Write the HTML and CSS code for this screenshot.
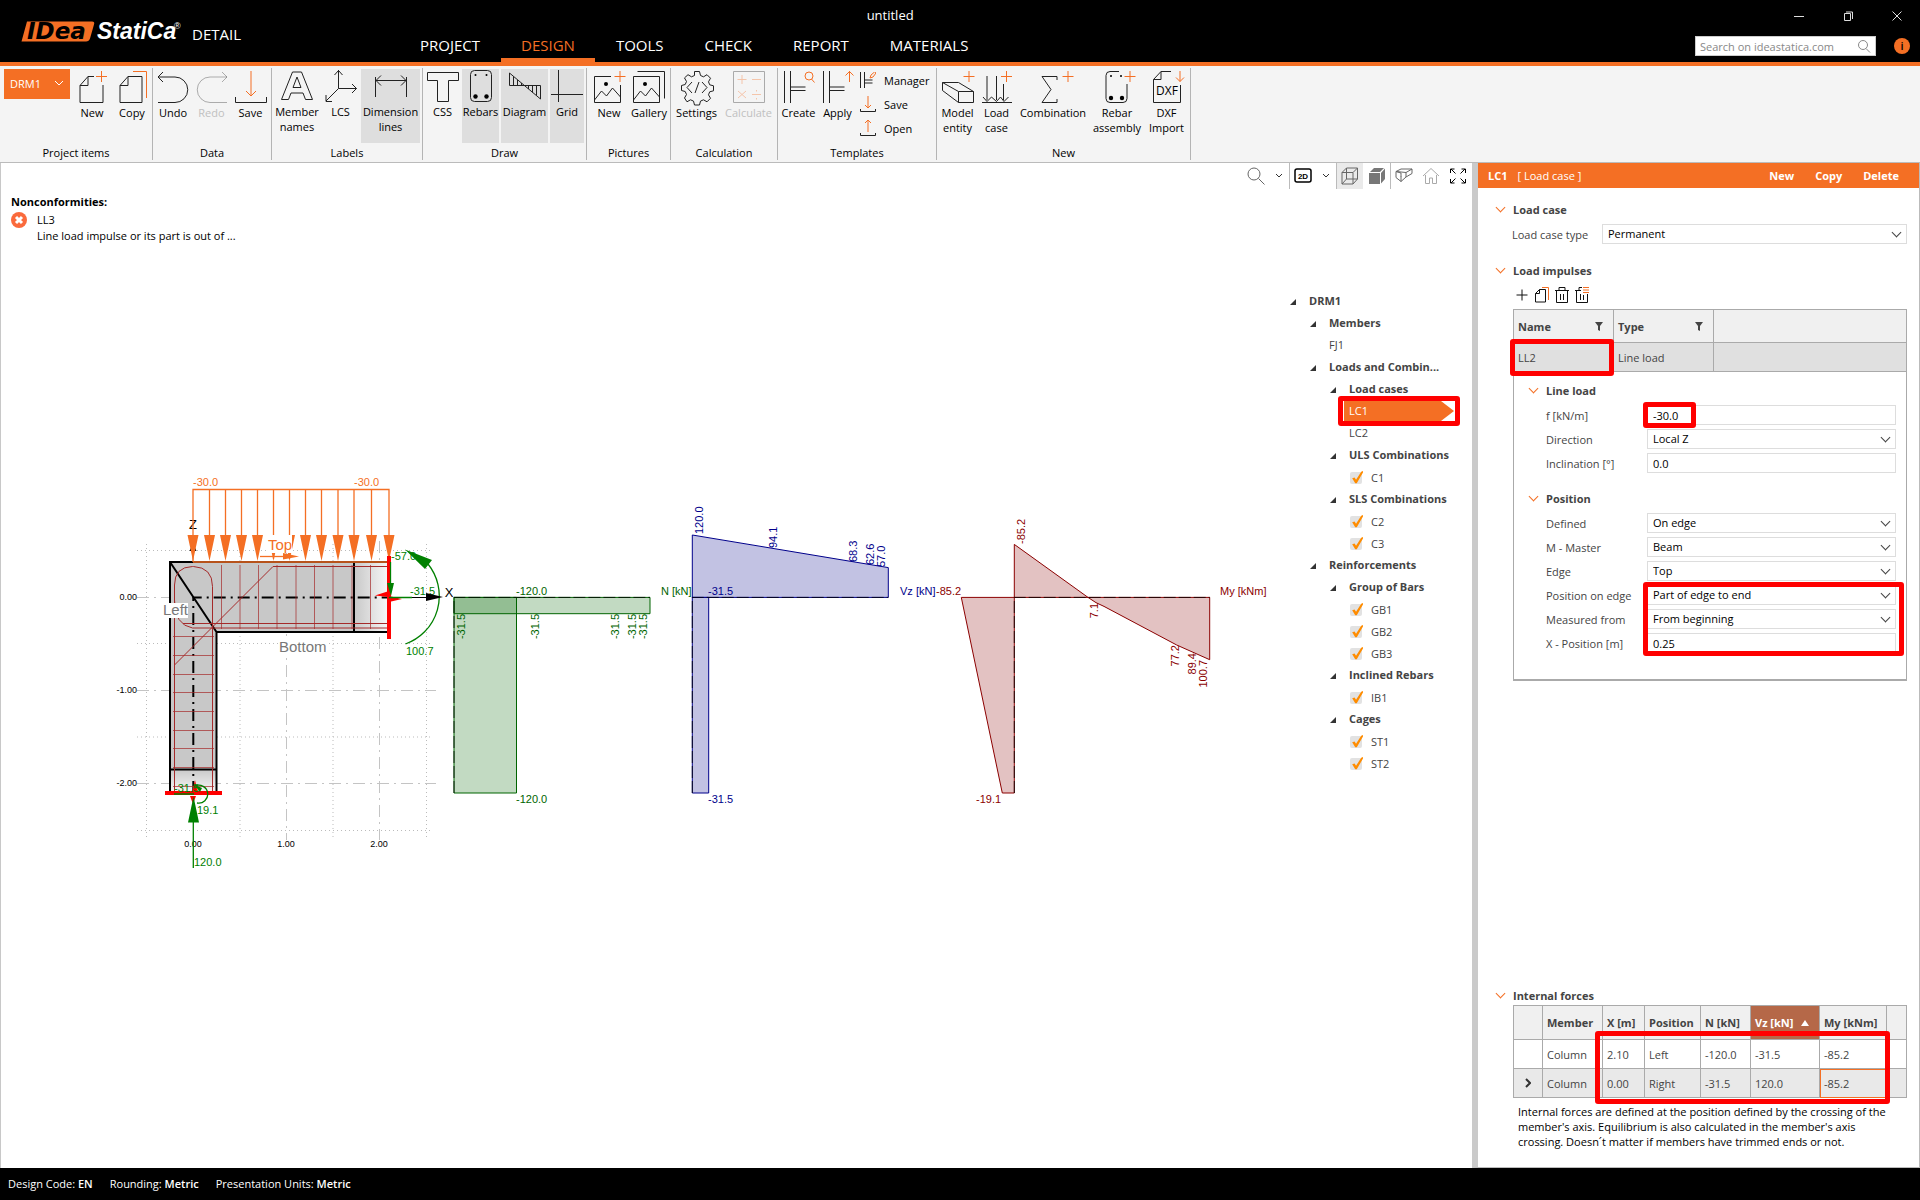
FILE: index.html
```html
<!DOCTYPE html>
<html lang="en">
<head>
    <meta charset="UTF-8">
    <title>untitled</title>
    <link rel="stylesheet" href="styles.css">
</head>
<body>
<header class="header">
    <div class="titlebar">
        <h1 class="title">untitled</h1>
        <div class="win">
            <button type="button" aria-label="Minimize"><svg width="12" height="12" viewBox="0 0 12 12"><path d="M1 6.5h10"/></svg></button>
            <button type="button" aria-label="Restore"><svg width="12" height="12" viewBox="0 0 12 12"><path d="M2.500 3.500h6v7h-6zM4 2h6.500v7"/></svg></button>
            <button type="button" aria-label="Close"><svg width="12" height="12" viewBox="0 0 12 12"><path d="M1.500 1.500l9 9M10.500 1.500l-9 9"/></svg></button>
        </div>
    </div>
    <div class="logo">
        <svg width="162" height="36" viewBox="0 -5 162 36">
            <path class="logo-plate" d="M8 3.500h65q3 0 2 3l-4 14q-1 3-4 3H2.500z"/>
            <text class="logo-idea" x="8" y="21">IDea</text>
            <text class="logo-statica" x="78" y="21">StatiCa</text>
            <text class="logo-reg" x="155" y="11">®</text>
        </svg>
        <span class="product">DETAIL</span>
    </div>
    <nav class="tabs">
        <a href="#">PROJECT</a>
        <a href="#" class="current">DESIGN</a>
        <a href="#">TOOLS</a>
        <a href="#">CHECK</a>
        <a href="#">REPORT</a>
        <a href="#">MATERIALS</a>
    </nav>
    <div class="help">
        <form class="search">
            <input type="text" placeholder="Search on ideastatica.com" aria-label="Search on ideastatica.com">
            <svg width="14" height="14" viewBox="0 0 14 14"><circle cx="6" cy="6" r="4.500"/><path d="M9 9.500l4 4"/></svg>
        </form>
        <button type="button" class="info" aria-label="Info">i</button>
    </div>
</header>

<div class="ribbon">
    <section class="group">
        <div class="tools tools-project">
            <button type="button" class="project">DRM1 <svg width="10" height="6" viewBox="0 0 10 6"><path d="M1 1l4 4 4-4"/></svg></button>
            <button type="button" class="tool">
                <svg class="ico" viewBox="0 0 32 32"><path d="M18 5.500h-6l-8 9v17h23V14M12 5.500v9H4"/><path class="o" d="M25.500 0v11M20 5.500h11"/></svg>New</button>
            <button type="button" class="tool">
                <svg class="ico" viewBox="0 0 32 32"><path d="M12 5.500h14v26H4v-17zM12 5.500v9H4"/><path class="o" d="M17 .5h13.500V27"/></svg>Copy</button>
        </div>
        <h2>Project items</h2>
    </section>
    <section class="group">
        <div class="tools tools-data">
            <button type="button" class="tool">
                <svg class="ico" viewBox="0 0 32 32"><path d="M1 6h17a12.500 12.500 0 0 1 0 25.500H1M6 1L1 6l5 5"/></svg>Undo</button>
            <button type="button" class="tool" disabled>
                <svg class="ico" viewBox="0 0 32 32"><path d="M31 6H14a12.500 12.500 0 0 0 0 25.500h17M26 1l5 5-5 5"/></svg>Redo</button>
            <button type="button" class="tool">
                <svg class="ico" viewBox="0 0 32 32"><path d="M.5 26v5.500h31V26"/><path class="o" d="M16 0v25M11 20l5 5 5-5"/></svg>Save</button>
        </div>
        <h2>Data</h2>
    </section>
    <section class="group short">
        <div class="tools tools-labels">
            <button type="button" class="tool">
                <svg class="ico" viewBox="0 0 32 32"><path d="M.5 29.500L11.500 2h9l11 27.500h-7L22 23H10l-2.500 6.500zM12 17.500h8L16 7z"/></svg>Member<br>names</button>
            <button type="button" class="tool">
                <svg class="ico" viewBox="0 0 32 32"><path d="M13.500 0v18.500h18M13.500 18.500L1 31M9.500 5l4-4.500 4 4.500M27 14l4.500 4.500L27 23M1 25v6.500h6"/></svg>LCS</button>
            <button type="button" class="tool on">
                <svg class="ico" viewBox="0 0 32 32"><path d="M.5 7v20M31.500 7v20M1 10.500h30M6 5.500l-5 5 5 5M26 5.500l5 5-5 5"/></svg>Dimension<br>lines</button>
        </div>
        <h2>Labels</h2>
    </section>
    <section class="group short">
        <div class="tools tools-draw">
            <button type="button" class="tool">
                <svg class="ico" viewBox="0 0 32 32"><path d="M.5 2.500h31v8h-10v21h-11v-21H.5z"/></svg>CSS</button>
            <button type="button" class="tool on">
                <svg class="ico" viewBox="0 0 32 32"><rect x="5.500" y=".5" width="21" height="31" rx="4"/><g class="dots"><circle cx="10.500" cy="5" r="1"/><circle cx="21.500" cy="5" r="1"/><circle cx="10.500" cy="26.500" r="2.200"/><circle cx="21.500" cy="26.500" r="2.200"/></g></svg>Rebars</button>
            <button type="button" class="tool on">
                <svg class="ico" viewBox="0 0 32 32"><path d="M.5 3l31 26V15.500H.5zM4.500 6.500v9M8.500 10v5.500M12.500 13v2.500M19.500 15.500v3.500M23.500 15.500v7M27.500 15.500v10"/></svg>Diagram</button>
            <button type="button" class="tool on">
                <svg class="ico" viewBox="0 0 32 32"><path d="M7.500 0v32M0 24.500h32"/></svg>Grid</button>
        </div>
        <h2>Draw</h2>
    </section>
    <section class="group">
        <div class="tools tools-two">
            <button type="button" class="tool">
                <svg class="ico" viewBox="0 0 32 32"><path d="M18 5.500H1.500v26h26V14M1.500 29l7-9 5 5 6-8 8 9"/><g class="dots"><circle cx="13" cy="13" r="2"/></g><path class="o" d="M27 0v11M21.500 5.500h11"/></svg>New</button>
            <button type="button" class="tool">
                <svg class="ico" viewBox="0 0 32 32"><path d="M.5 5.500h26v26H.5zM4.500.5h27v27M.5 29l7-9 5 5 6-8 8 9"/><g class="dots"><circle cx="12" cy="13" r="2"/></g></svg>Gallery</button>
        </div>
        <h2>Pictures</h2>
    </section>
    <section class="group">
        <div class="tools tools-calc">
            <button type="button" class="tool">
                <svg class="ico" viewBox="0 0 32 32"><path d="M13.500.5h5l1 4 3 1.300 3.500-2.100 3.500 3.500-2 3.600 1.200 3 3.800 1v5l-3.800 1-1.200 3 2 3.500-3.500 3.500-3.500-2-3 1.300-1 3.900h-5l-1-3.900-3-1.300-3.500 2L3.500 27l2-3.500-1.300-3-3.700-1v-5l3.700-1 1.300-3-2-3.600L7 3.700l3.500 2.100 3-1.300z"/><path d="M11 11l-5 5.500 5 5.500M21 11l5 5.500-5 5.500M18 11l-4 11"/></svg>Settings</button>
            <button type="button" class="tool" disabled>
                <svg class="ico" viewBox="0 0 32 32"><path d="M.5.500h31v31H.5z"/><path class="o" d="M4.500 8.500h9M9 4v9M19 8.500h9M5 20l8 7M13 20l-8 7M19 23.500h9M23.500 19v1.500M23.500 27v1.500"/></svg>Calculate</button>
        </div>
        <h2>Calculation</h2>
    </section>
    <section class="group">
        <div class="tools tools-templates">
            <button type="button" class="tool">
                <svg class="ico" viewBox="0 0 32 32"><path d="M1.500 0v32M7.500 0v32M7.500 16h15M7.500 19.500h15"/><g class="o"><circle cx="26" cy="5" r="4"/><path d="M28.500 8l3 3.500"/></g></svg>Create</button>
            <button type="button" class="tool">
                <svg class="ico" viewBox="0 0 32 32"><path d="M1.500 0v32M7.500 0v32M7.500 16h15M7.500 19.500h15"/><path class="o" d="M27.500 11V0M23.500 4.500L27.500.5l4 4"/></svg>Apply</button>
            <div class="stack">
                <button type="button"><svg width="16" height="16" viewBox="0 0 16 16"><path d="M.5 0v16M4.500 0v16M4.500 8h8M4.500 11h8"/><path class="o" d="M10 6l1-3 3.500-3 1.500 1-3 4z"/></svg>Manager</button>
                <button type="button"><svg width="16" height="16" viewBox="0 0 16 16"><path d="M.5 13v2.500h15V13"/><path class="o" d="M8 0v12M5 9l3 3 3-3"/></svg>Save</button>
                <button type="button"><svg width="16" height="16" viewBox="0 0 16 16"><path d="M.5 13v2.500h15V13"/><path class="o" d="M8 12V0M5 3l3-3 3 3"/></svg>Open</button>
            </div>
        </div>
        <h2>Templates</h2>
    </section>
    <section class="group">
        <div class="tools tools-new">
            <button type="button" class="tool">
                <svg class="ico" viewBox="0 0 32 32"><path d="M.5 11.500h16l15 9v11h-15l-16-12zM.5 11.500l16 9h15M16.500 20.500v11"/><path class="o" d="M27 0v11M21.500 5.500h11"/></svg>Model<br>entity</button>
            <button type="button" class="tool">
                <svg class="ico" viewBox="0 0 32 32"><path d="M1 31.500h30M6 5v24M15.500 5v24M22.500 13v16M2 26l4 4.500 4.500-4.500 5 4.500 4-4.500 3.500 4.500 4.500-4.500"/><path class="o" d="M25.500 0v11M20 5.500h11"/></svg>Load<br>case</button>
            <button type="button" class="tool">
                <svg class="ico" viewBox="0 0 32 32"><path d="M20 9V5.500H5l9 13-9 13h15V28"/><path class="o" d="M31 0v11M25.500 5.500h11"/></svg>Combination</button>
            <button type="button" class="tool">
                <svg class="ico" viewBox="0 0 32 32"><path d="M18 .5H9q-4 0-4 4v23q0 4 4 4h13q4 0 4-4V13"/><g class="dots"><circle cx="10" cy="5" r="1"/><circle cx="20" cy="5" r="1"/><circle cx="10" cy="27" r="2.200"/><circle cx="21" cy="27" r="2.200"/></g><path class="o" d="M29 0v11M23.500 5.500h11"/></svg>Rebar<br>assembly</button>
            <button type="button" class="tool">
                <svg class="ico" viewBox="0 0 32 32"><path d="M20 .5H10l-7.500 8v23h27V14M10 .5v8H2.500"/><text class="dxf" x="16" y="24">DXF</text><path class="o" d="M29 0v10.500M25 6.500l4 4 4-4"/></svg>DXF<br>Import</button>
        </div>
        <h2>New</h2>
    </section>
</div>

<main class="main">
    <div class="viewer">
        <div class="viewbar">
            <button type="button" class="vb" aria-label="Zoom"><svg width="18" height="18" viewBox="0 0 18 18"><circle cx="7" cy="7" r="6"/><path d="M11.500 11.500l6 6"/></svg></button>
            <button type="button" class="vb drop" aria-label="Zoom options"><svg width="8" height="6" viewBox="0 0 8 6"><path d="M1 1l3 3 3-3"/></svg></button>
            <button type="button" class="vb line" aria-label="2D view"><svg class="k" width="18" height="16" viewBox="0 0 18 16"><rect x="1" y="1" width="16" height="13" rx="2"/><text x="9" y="11">2D</text></svg></button>
            <button type="button" class="vb drop" aria-label="2D options"><svg width="8" height="6" viewBox="0 0 8 6"><path d="M1 1l3 3 3-3"/></svg></button>
            <button type="button" class="vb line on" aria-label="Wireframe"><svg width="18" height="18" viewBox="0 0 18 18"><path d="M1 5.500L5.500 1h11v11L12 17H1zM1 5.500h11V17M12 5.500L16.500 1M5.500 1v11h11M5.500 12L1 17"/></svg></button>
            <button type="button" class="vb" aria-label="Solid"><svg width="18" height="18" viewBox="0 0 18 18"><path class="f" d="M1 6h11v11H1zM2 5l4-4h10l-4 4zM13 6l4-4.500V12l-4 4.500z"/></svg></button>
            <button type="button" class="vb line" aria-label="Perspective"><svg width="18" height="16" viewBox="0 0 18 16"><path d="M1 3.500L6 1h11l-6 3.500zM1 3.500v6l5 4v-5M11 4.500v4.500l-5 4.500M17 1v4.500L11 9M1 3.500l5 1.500v4"/></svg></button>
            <button type="button" class="vb dim" aria-label="Home"><svg width="18" height="18" viewBox="0 0 18 18"><path d="M1 9l8-7.500L17 9M3.500 8v8.500h4V11h3v5.500h4V8"/></svg></button>
            <button type="button" class="vb" aria-label="Full screen"><svg class="k thin" width="18" height="18" viewBox="0 0 18 18"><path d="M1.500 6V2h4M2 2l4.500 4.500M12.500 2h4v4M16 2l-4.500 4.500M1.500 12v4h4M2 16l4.500-4.500M16.500 12v4h-4M16 16l-4.500-4.500"/></svg></button>
        </div>
        <div class="scene">
            <div class="drawing">
                <svg class="canvas" width="1281" height="720" viewBox="1 189 1281 720">
                    <defs>
                        <linearGradient id="fadeX"><stop offset="0" stop-color="#c8c8c8"/><stop offset="1" stop-color="#f8f8f8"/></linearGradient>
                        <linearGradient id="fadeY" x2="0" y2="1"><stop offset="0" stop-color="#c8c8c8"/><stop offset="1" stop-color="#f8f8f8"/></linearGradient>
                    </defs>
                    <!-- background grid -->
                    <path class="g-dot" d="M146.500 544v296M240 544v296M333 544v296M426.500 544v296M137 550.500h296M137 643.500h296M137 737h296M137 830.500h296"/>
                    <path class="g-dash" d="M286.500 545v295M379.500 541v299M137 597.500h299M137 690.500h299M137 783.500h299"/>
                    <g class="axis-y"><text x="137" y="600">0.00</text><text x="137" y="693">-1.00</text><text x="137" y="786">-2.00</text></g>
                    <g class="axis-x"><text x="193" y="847">0.00</text><text x="286" y="847">1.00</text><text x="379" y="847">2.00</text></g>

                    <!-- frame joint -->
                    <path d="M170 562h184v70H217v137h-47z" fill="#c8c8c8"/>
                    <rect x="354" y="562" width="35" height="70" fill="url(#fadeX)"/>
                    <rect x="170" y="769" width="47" height="24" fill="url(#fadeY)"/>
                    <path class="member" d="M389 562H170v231M389 632H216.500v161M170 562l46.500 70M354 562v70M170 769.500h47"/>
                    <path class="centre" d="M193.300 793V597.400H389"/>

                    <!-- rebars -->
                    <path class="bar" d="M174.500 793V585q0-18 18-18.500h1q19 1 19 20V793M174.500 600q0 25 18 28H389M183 623.500h206M174.500 665L273 566.500h116"/>
                    <path class="link" d="M221.500 565v64M240 565v64M258.500 565v64M277 565v64M296 565v64M314.500 565v64M333 565v64M352 565v64M370.500 565v64M173 636.500h41M173 655.500h41M173 674.500h41M173 692.500h41M173 711.500h41M173 730.500h41M173 748.500h41M173 767.500h41M173 786.500h41"/>

                    <!-- line load -->
                    <text class="axis" x="193" y="529">Z</text>
                    <path d="M189.500 551l3.500-8 3.500 8z"/>
                    <path class="load" d="M193 562V489.500h196V562M209.500 489v60M225.500 489v60M241.500 489v60M257.500 489v60M273.500 489v70M289.500 489v70M305.500 489v60M321.500 489v60M338 489v60M354 489v60M371.500 489v60M193 562h196"/>
                    <path class="load-head" d="M187.500 535h11l-5.500 26zM204 535h11l-5.500 26zM220 535h11l-5.500 26zM236 535h11l-5.500 26zM252 535h11l-5.500 26zM268 535h11l-5.500 26zM284 535h11l-5.500 26zM300 535h11l-5.500 26zM316 535h11l-5.500 26zM332.500 535h11l-5.500 26zM348.500 535h11l-5.500 26zM366 535h11l-5.500 26zM383.500 535h11l-5.500 26z"/>
                    <g class="val load-head"><text x="193" y="486">-30.0</text><text x="354" y="486">-30.0</text></g>
                    <rect class="plate" x="267" y="535" width="25" height="18"/>
                    <path class="load" d="M260 556.500h30"/>
                    <path class="load-head" d="M283 553l16 3.500-16 3z"/>
                    <text class="edge load-head" x="268" y="550">Top</text>
                    <rect class="plate" x="163" y="603" width="25" height="15"/>
                    <text class="edge" x="163" y="615">Left</text>
                    <rect class="plate" x="279" y="639" width="48" height="14"/>
                    <text class="edge" x="279" y="652">Bottom</text>

                    <!-- supports and reactions -->
                    <path class="support" d="M389 556v83M165 793h57"/>
                    <path class="support-head" d="M375 595.500l14-4.500v5l13 3-13 3v-5zM190 796h6l-3 8zM192 793l3-13 3 13z"/>
                    <path class="react" d="M390.500 562v22M389 597.500h23M405.500 644A51 51 0 0 0 428 564M174 794h20M193.300 868v-50M195 786a9 9 0 1 1 2 17"/>
                    <path class="react-head" d="M387 583h7l-3 13zM405 549.500l27 10.500-7 9zM188 822.500h11l-5.500-26zM195 785l7 3-2 4z"/>
                    <g class="val react-head"><text x="391" y="560">-57.0</text><text x="410" y="595">-31.5</text><text x="406" y="655">100.7</text><text x="174" y="792">-31.5</text><text x="197" y="814">19.1</text><text x="194" y="866">120.0</text></g>
                    <path d="M412 597h14v-4l17 4-17 4v-3h-14z"/>
                    <text class="axis" x="449" y="597">X</text>

                    <!-- N diagram -->
                    <g class="dia dia-n">
                        <path d="M454 597.400h196v16.300H454z"/>
                        <path d="M454 597.400h62.500V793H454z"/>
                        <g class="val"><text x="516" y="595">-120.0</text><text x="661" y="595">N [kN]</text><text x="516" y="803">-120.0</text></g>
                        <g class="val rot-end"><text transform="translate(465 614) rotate(-90)">-31.5</text><text transform="translate(539 614) rotate(-90)">-31.5</text><text transform="translate(619 614) rotate(-90)">-31.5</text><text transform="translate(636 614) rotate(-90)">-31.5</text><text transform="translate(647 614) rotate(-90)">-31.5</text></g>
                    </g>
                    <!-- Vz diagram -->
                    <g class="dia dia-v">
                        <path d="M692.300 597.400V535l196 32.600v29.800zM692.300 597.400h16.400V793h-16.400z"/>
                        <g class="val"><text x="708" y="595">-31.5</text><text x="900" y="595">Vz [kN]</text><text x="708" y="803">-31.5</text></g>
                        <g class="val"><text transform="translate(703 534) rotate(-90)">120.0</text><text transform="translate(777 548) rotate(-90)">94.1</text><text transform="translate(857 562) rotate(-90)">68.3</text><text transform="translate(874 565) rotate(-90)">62.6</text><text transform="translate(885 567) rotate(-90)">57.0</text></g>
                    </g>
                    <!-- My diagram -->
                    <g class="dia dia-m">
                        <path d="M1014.300 597.400v-53l73.700 53q8 6 16 9l72.700 38.600 33 14.700v-62.300zM1014.300 597.400h-53L1002.300 793h12z"/>
                        <g class="val"><text x="936" y="595">-85.2</text><text x="1220" y="595">My [kNm]</text><text x="976" y="803">-19.1</text></g>
                        <g class="val"><text transform="translate(1025 544) rotate(-90)">-85.2</text></g>
                        <g class="val rot-end"><text transform="translate(1098 603) rotate(-90)">7.1</text><text transform="translate(1179 645) rotate(-90)">77.2</text><text transform="translate(1196 653) rotate(-90)">89.4</text><text transform="translate(1207 660) rotate(-90)">100.7</text></g>
                    </g>
                    <path class="base" d="M454 793V597.400h196M692.300 793V597.400h196M1014.300 793V597.400h195.500"/>
                </svg>
                <div class="noncon">
                    <h3>Nonconformities:</h3>
                    <div class="noncon-item">
                        <svg class="error" width="16" height="16" viewBox="0 0 16 16"><circle cx="8" cy="8" r="8"/><path d="M5 5l6 6M11 5l-6 6"/></svg>
                        <p>LL3<br>Line load impulse or its part is out of ...</p>
                    </div>
                </div>
            </div>
            <ul class="tree">
                <li><b>DRM1</b>
                    <ul>
                        <li><b>Members</b>
                            <ul><li><a href="#">FJ1</a></li></ul>
                        </li>
                        <li><b>Loads and Combin...</b>
                            <ul>
                                <li><b>Load cases</b>
                                    <ul>
                                        <li class="selected"><a href="#">LC1</a><span class="mark"></span></li>
                                        <li><a href="#">LC2</a></li>
                                    </ul>
                                </li>
                                <li><b>ULS Combinations</b>
                                    <ul><li><label><input type="checkbox" checked>C1</label></li></ul>
                                </li>
                                <li><b>SLS Combinations</b>
                                    <ul>
                                        <li><label><input type="checkbox" checked>C2</label></li>
                                        <li><label><input type="checkbox" checked>C3</label></li>
                                    </ul>
                                </li>
                            </ul>
                        </li>
                        <li><b>Reinforcements</b>
                            <ul>
                                <li><b>Group of Bars</b>
                                    <ul>
                                        <li><label><input type="checkbox" checked>GB1</label></li>
                                        <li><label><input type="checkbox" checked>GB2</label></li>
                                        <li><label><input type="checkbox" checked>GB3</label></li>
                                    </ul>
                                </li>
                                <li><b>Inclined Rebars</b>
                                    <ul><li><label><input type="checkbox" checked>IB1</label></li></ul>
                                </li>
                                <li><b>Cages</b>
                                    <ul>
                                        <li><label><input type="checkbox" checked>ST1</label></li>
                                        <li><label><input type="checkbox" checked>ST2</label></li>
                                    </ul>
                                </li>
                            </ul>
                        </li>
                    </ul>
                </li>
            </ul>
        </div>
    </div>

    <aside class="panel">
        <div class="panel-head">
            <b>LC1</b><span>[ Load case ]</span>
            <div class="panel-actions">
                <button type="button">New</button>
                <button type="button">Copy</button>
                <button type="button">Delete</button>
            </div>
        </div>
        <div class="panel-body">
            <h3 class="sec">Load case</h3>
            <div class="row row-case">
                <label for="caseType">Load case type</label>
                <span class="sel"><select id="caseType"><option>Permanent</option></select></span>
            </div>

            <h3 class="sec sec-impulses">Load impulses</h3>
            <div class="icons">
                <button type="button" aria-label="Add"><svg width="14" height="16" viewBox="0 0 14 16"><path d="M7 2.500v11M1.500 8h11"/></svg></button>
                <button type="button" aria-label="Copy"><svg width="14" height="16" viewBox="0 0 14 16"><path d="M4.500 2.500h6v12.500H.5V6.500zM4.500 2.500v4h-4"/><path class="o" d="M7 .5h6.500V13"/></svg></button>
                <button type="button" aria-label="Delete"><svg width="14" height="16" viewBox="0 0 14 16"><path d="M0 3.500h14M4 3.500v-3h6v3M1.500 3.500v12h11v-12M5.500 7v6M8.500 7v6"/></svg></button>
                <button type="button" aria-label="Delete all"><svg width="14" height="16" viewBox="0 0 14 16"><path d="M0 3.500h6M4 3.500v-3h3M1.500 3.500v12h11V7M5.500 7v6M8.500 8v5"/><path class="o" d="M8 .5h6M8 3h6M8 5.500h6"/></svg></button>
            </div>

            <table class="grid impulses">
                <tr>
                    <th>Name <svg class="filter" width="8" height="9" viewBox="0 0 8 9"><path d="M0 0h8L5 4v5L3 8V4z"/></svg></th>
                    <th>Type <svg class="filter" width="8" height="9" viewBox="0 0 8 9"><path d="M0 0h8L5 4v5L3 8V4z"/></svg></th>
                    <th></th>
                </tr>
                <tr class="active">
                    <td>LL2<span class="mark"></span></td>
                    <td>Line load</td>
                    <td></td>
                </tr>
            </table>

            <div class="detail">
                <h3 class="sec">Line load</h3>
                <div class="row"><label for="f">f [kN/m]</label><span class="field"><input type="text" id="f" value="-30.0"><span class="mark mark-f"></span></span></div>
                <div class="row"><label for="dir">Direction</label><span class="sel"><select id="dir"><option>Local Z</option></select></span></div>
                <div class="row"><label for="inc">Inclination [°]</label><span class="field"><input type="text" id="inc" value="0.0"></span></div>

                <h3 class="sec sec-pos">Position</h3>
                <div class="row"><label for="defined">Defined</label><span class="sel"><select id="defined"><option>On edge</option></select></span></div>
                <div class="row"><label for="master">M - Master</label><span class="sel"><select id="master"><option>Beam</option></select></span></div>
                <div class="row"><label for="edge">Edge</label><span class="sel"><select id="edge"><option>Top</option></select></span></div>
                <div class="marked-rows">
                    <div class="row"><label for="onEdge">Position on edge</label><span class="sel"><select id="onEdge"><option>Part of edge to end</option></select></span></div>
                    <div class="row"><label for="from">Measured from</label><span class="sel"><select id="from"><option>From beginning</option></select></span></div>
                    <div class="row"><label for="xpos">X - Position [m]</label><span class="field"><input type="text" id="xpos" value="0.25"></span></div>
                    <span class="mark mark-pos"></span>
                </div>
            </div>

            <div class="forces-box">
                <h3 class="sec">Internal forces</h3>
                <div class="forces-wrap">
                    <table class="grid forces">
                        <colgroup><col class="c1"><col class="c2"><col class="c3"><col class="c4"><col class="c5"><col class="c6"><col class="c7"><col></colgroup>
                        <tr><th></th><th>Member</th><th>X [m]</th><th>Position</th><th>N [kN]</th><th class="sorted">Vz [kN] <svg class="filter" width="8" height="6" viewBox="0 0 8 6"><path d="M0 6l4-6 4 6z"/></svg></th><th>My [kNm]</th><th></th></tr>
                        <tr><td></td><td>Column</td><td>2.10</td><td>Left</td><td>-120.0</td><td>-31.5</td><td>-85.2</td><td></td></tr>
                        <tr class="active"><td><svg class="arrow" width="6" height="10" viewBox="0 0 6 10"><path d="M1 1l4 4-4 4"/></svg></td><td>Column</td><td>0.00</td><td>Right</td><td>-31.5</td><td>120.0</td><td class="focus">-85.2</td><td></td></tr>
                    </table>
                    <span class="mark mark-forces"></span>
                </div>
                <p class="note">Internal forces are defined at the position defined by the crossing of the member's axis. Equilibrium is also calculated in the member's axis crossing. Doesn´t matter if members have trimmed ends or not.</p>
            </div>
        </div>
    </aside>
</main>

<footer class="status">
    <span>Design Code: <b>EN</b></span>
    <span>Rounding: <b>Metric</b></span>
    <span>Presentation Units: <b>Metric</b></span>
</footer>
</body>
</html>
```

FILE: styles.css
```css
* {
    box-sizing: border-box;
    margin: 0;
    padding: 0;
}

body {
    display: flex;
    flex-direction: column;
    min-height: 100vh;
    font: 11px/15px "Open Sans", "Noto Sans", sans-serif;
    color: #000;
    background: #fff;
}

button, input, select {
    font: inherit;
    color: inherit;
    border: 0;
    background: none;
    border-radius: 0;
}

ul {
    list-style: none;
}

a {
    color: inherit;
    text-decoration: none;
}

b, h3, th {
    font-size: 11px;
    font-weight: 700;
}

svg {
    fill: none;
    stroke: #222;
    flex: none;
}

svg text {
    stroke: none;
}

/* red callout frame */
.mark {
    position: absolute;
    inset: -3px;
    border: 5px solid #f00;
    border-radius: 3px;
    pointer-events: none;
    z-index: 2;
}

/* header */
.header {
    display: grid;
    grid-template-columns: 400px 1fr auto;
    grid-template-rows: 30px 32px;
    color: #fff;
    background: #000;
    border-bottom: 4px solid #f46f24;
}

.titlebar {
    grid-area: 1 / 1 / 2 / -1;
    display: flex;
    align-items: center;
}

.title {
    flex: 1;
    padding-left: 4px;
    font-size: 13px;
    line-height: 28px;
    font-weight: 400;
    text-align: center;
}

.win {
    height: 30px;
}

.win button {
    width: 46px;
    height: 28px;
}

.win svg {
    stroke: #ddd;
    vertical-align: middle;
}

.logo {
    grid-area: 1 / 1 / 3 / 2;
    display: flex;
    align-items: center;
    gap: 11px;
    padding-left: 19px;
}

.logo-plate {
    fill: #f46f24;
    stroke: none;
}

.logo-idea {
    font: italic bold 23px "DejaVu Sans", sans-serif;
    fill: #000;
}

.logo-statica {
    font: italic bold 23px "Liberation Sans", sans-serif;
    fill: #fff;
}

.logo-reg {
    font: 9px "Liberation Sans", sans-serif;
    fill: #fff;
}

.product {
    font-size: 15px;
    padding-top: 6px;
}

.tabs {
    display: flex;
    gap: 1px;
    grid-area: 2 / 2;
}

.tabs a {
    padding: 0 20px;
    font-size: 15px;
    line-height: 30px;
}

.tabs a.current {
    color: #f46f24;
    box-shadow: inset 0 -4px #f46f24;
}

.help {
    grid-area: 2 / 3;
    display: flex;
    align-items: center;
    gap: 18px;
    padding-right: 10px;
}

.search {
    display: flex;
    align-items: center;
    width: 181px;
    height: 20px;
    padding: 0 4px;
    background: #fff;
    border: 1px solid #ccc;
}

.search input {
    flex: 1;
    min-width: 0;
    outline: 0;
}

.search input::placeholder {
    color: #888;
}

.search svg {
    stroke: #888;
}

.info {
    width: 16px;
    height: 16px;
    border-radius: 50%;
    background: #f46f24;
    color: #000;
    font-weight: 600;
    line-height: 16px;
}

/* ribbon */
.ribbon {
    display: flex;
    height: 97px;
    padding: 2px 0;
    background: #f4f4f4;
    border-bottom: 1px solid #bbb;
}

.group {
    display: flex;
    flex-direction: column;
    justify-content: space-between;
    padding: 0 2px;
    border-right: 1px solid #b4b4b4;
}

.group h2 {
    font-size: 11px;
    font-weight: 400;
    text-align: center;
}

.tools {
    display: grid;
    gap: 2px;
    height: 75px;
    padding-top: 1px;
}

.tools-project { grid-template-columns: 66px 40px 36px; padding-left: 2px; }
.tools-data { grid-template-columns: 36px 37px 37px; }
.tools-labels { grid-template-columns: 46px 37px 59px; }
.tools-draw { grid-template-columns: 35px 37px 47px 34px; }
.tools-two { grid-template-columns: 38px 38px; padding-left: 1px; }
.tools-calc { grid-template-columns: 47px 53px; }
.tools-templates { grid-template-columns: 37px 37px 76px; }
.tools-new { grid-template-columns: 37px 37px 72px 52px 43px; }

.project {
    display: flex;
    align-items: center;
    justify-content: space-between;
    height: 30px;
    padding: 0 6px 2px;
    color: #fff;
    background: #f46f24;
}

.project svg {
    stroke: #fff;
}

.tool {
    display: flex;
    flex-direction: column;
    align-items: center;
    padding-top: 2px;
    text-align: center;
    white-space: nowrap;
}

.tool > .ico {
    width: 32px;
    height: 32px;
    margin-bottom: 2px;
    overflow: visible;
}

.short .tool {
    padding-top: 1px;
}

.tool.on {
    background: #dedede;
}

.tool:disabled {
    color: #c0c0c0;
}

.tool:disabled svg {
    opacity: .35;
}

.o {
    stroke: #f46f24;
    fill: none;
}

.dots {
    fill: #000;
    stroke: none;
}

.dxf {
    font: 12px "Open Sans", sans-serif;
    fill: #000;
    text-anchor: middle;
}

.stack {
    display: grid;
    grid-auto-rows: 24px;
}

.stack button {
    display: flex;
    align-items: center;
    gap: 8px;
    padding: 0 0 2px 2px;
}

/* main area */
.main {
    flex: 1;
    display: grid;
    grid-template-columns: 1fr 448px;
    border-left: 1px solid #c8c8c8;
}

.viewer {
    display: flex;
    flex-direction: column;
    min-width: 0;
}

.viewbar {
    display: flex;
    justify-content: flex-end;
    height: 26px;
    padding-right: 1px;
}

.vb {
    display: flex;
    align-items: center;
    justify-content: center;
    width: 27px;
}

.vb svg {
    stroke: #666;
}

.vb svg.k {
    stroke: #000;
    stroke-width: 1.5;
}

.vb svg.thin {
    stroke-width: 1;
}

.vb svg text {
    font: bold 8px "Liberation Sans", sans-serif;
    fill: #000;
    text-anchor: middle;
}

.vb .f {
    fill: #777;
    stroke: none;
}

.vb.drop {
    width: 20px;
}

.vb.drop svg {
    stroke: #333;
}

.vb.line {
    border-left: 1px solid #bbb;
}

.vb.on {
    background: #eaeaea;
}

.vb.dim svg {
    stroke: #aaa;
}

.scene {
    display: grid;
    grid-template-columns: 1fr 190px;
}

.drawing {
    position: relative;
    min-width: 0;
    overflow: hidden;
}

.noncon {
    position: absolute;
    left: 10px;
    top: 5px;
}

.noncon-item {
    display: flex;
    gap: 10px;
    padding-top: 3px;
    line-height: 16px;
}

.error {
    fill: #fa6a3c;
    stroke: none;
}

.error path {
    stroke: #fff;
    stroke-width: 3;
}

/* drawing */
.canvas {
    display: block;
    stroke: none;
    fill: #000;
    font-family: "Liberation Sans", Arial, sans-serif;
}

.g-dot { stroke: #bbb; stroke-dasharray: 1 3; }
.g-dash { stroke: #c4c4c4; stroke-dasharray: 12 5 2 5; }
.axis-x, .axis-y { font-size: 9px; }
.axis-x { text-anchor: middle; }
.axis-y { text-anchor: end; }
.axis { font-size: 13px; text-anchor: middle; }
.val { font-size: 11px; }
.rot-end { text-anchor: end; }
.edge { font-size: 15px; fill: #777; }
.edge.load-head { fill: #f46f24; }
.plate { fill: #fff; }
.member { fill: none; stroke: #000; stroke-width: 2; }
.centre { fill: none; stroke: #000; stroke-width: 2; stroke-dasharray: 12 5 2 5; }
.bar { fill: none; stroke: #a52a2a; }
.link { fill: none; stroke: #a52a2a; stroke-opacity: .7; }
.load { fill: none; stroke: #f46f24; stroke-width: 1.3; }
.load-head { fill: #f46f24; }
.support { fill: none; stroke: #f00; stroke-width: 4; }
.support-head { fill: #f00; }
.react { fill: none; stroke: #008000; stroke-width: 1.3; }
.react-head { fill: #008000; }
.dia path { fill-opacity: .24; }
.dia-n { fill: #006400; }
.dia-n path { stroke: #006400; }
.dia-v { fill: #00008b; }
.dia-v path { stroke: #00008b; }
.dia-m { fill: #8b0000; }
.dia-m path { stroke: #8b0000; }
.base { fill: none; stroke: #000; stroke-opacity: .8; stroke-dasharray: 12 3; }

/* tree */
.tree {
    padding-top: 101px;
    padding-left: 8px;
    line-height: 22px;
    color: #444;
    white-space: nowrap;
}

.tree ul {
    padding-left: 20px;
}

.tree b::before {
    content: "";
    display: inline-block;
    width: 6px;
    height: 6px;
    margin-right: 13px;
    background: #333;
    clip-path: polygon(100% 0, 100% 100%, 0 100%);
}

.tree a {
    display: block;
    margin-left: -1px;
}

.selected {
    position: relative;
    width: 104px;
}

.tree .selected a {
    margin-left: -6px;
    padding-left: 5px;
    color: #fff;
    background: #f46f24;
    clip-path: polygon(0 0, 87% 0, 100% 50%, 87% 100%, 0 100%);
}

.selected .mark {
    inset: -4px -6px -4px -12px;
}

.tree label {
    display: flex;
    align-items: center;
    gap: 9px;
    height: 22px;
    padding-top: 2px;
}

.tree input {
    appearance: none;
    position: relative;
    width: 12px;
    height: 12px;
    background: #e2e2e2;
    border-radius: 2px;
}

.tree input:checked::after {
    content: "";
    position: absolute;
    inset: -1px -1px 0 1px;
    background: #ff8c00;
    clip-path: polygon(10% 55%, 30% 50%, 42% 68%, 85% 5%, 100% 0, 100% 12%, 48% 95%, 35% 95%);
}

/* right panel */
.panel {
    display: flex;
    flex-direction: column;
    border-left: 6px solid #cacaca;
    border-right: 1px solid #bbb;
    border-bottom: 1px solid #bbb;
    color: #444;
}

.panel-head {
    display: flex;
    align-items: center;
    height: 25px;
    padding: 0 20px 0 10px;
    color: #fff;
    background: #f46f24;
}

.panel-head span {
    margin-left: 10px;
}

.panel-actions {
    display: flex;
    gap: 21px;
    margin-left: auto;
}

.panel-actions button {
    font-weight: 700;
}

.panel-body {
    flex: 1;
    display: flex;
    flex-direction: column;
    padding: 14px 12px 18px 18px;
}

.sec {
    display: flex;
    align-items: center;
}

.sec::before {
    content: "";
    width: 6px;
    height: 6px;
    margin: -4px 9px 0 1px;
    border: solid #f46f24;
    border-width: 0 1px 1px 0;
    transform: rotate(45deg);
}

.sec-impulses {
    margin-top: 19px;
}

.row {
    display: grid;
    grid-template-columns: 101px 1fr;
    align-items: center;
    height: 20px;
    margin-bottom: 4px;
}

.row-case {
    grid-template-columns: 90px 1fr;
    margin: 7px 0 0 16px;
}

.field, .sel {
    position: relative;
}

.row input, .row select {
    display: block;
    width: 100%;
    height: 20px;
    padding: 0 5px;
    color: #000;
    background: #fff;
    border: 1px solid #ddd;
    appearance: none;
}

.row select {
    padding-bottom: 2px;
}

.sel::after {
    content: "";
    position: absolute;
    right: 7px;
    top: 5px;
    width: 6px;
    height: 6px;
    border: solid #444;
    border-width: 0 1px 1px 0;
    transform: rotate(45deg);
    pointer-events: none;
}

.icons {
    display: flex;
    gap: 6px;
    margin: 9px 0 6px 19px;
}

.icons button {
    height: 16px;
}

.icons svg {
    display: block;
    stroke: #111;
}

.grid {
    width: 394px;
    table-layout: fixed;
    border-collapse: collapse;
    text-align: left;
}

.grid th, .grid td {
    position: relative;
    height: 29px;
    padding: 0 4px;
    border: 1px solid #aaa;
    white-space: nowrap;
}

.grid th {
    height: 33px;
    background: #f0f0f0;
}

.filter {
    fill: #444;
    stroke: none;
}

.impulses {
    margin-left: 17px;
}

.impulses th:nth-child(-n+2) {
    width: 100px;
}

.impulses .filter {
    float: right;
    margin: 3px 6px 0 0;
}

.impulses .active td {
    background: #e0e0e0;
}

.impulses .mark {
    inset: -4px -1px -5px -4px;
}

.detail {
    width: 394px;
    margin-left: 17px;
    padding: 11px 10px 22px 15px;
    border: solid #aaa;
    border-width: 0 1px 2px;
}

.detail .row {
    margin-left: 17px;
}

.detail .sec {
    margin-bottom: 7px;
}

.detail .sec-pos {
    margin-top: 18px;
}

.field .mark-f {
    inset: -3px auto -3px -4px;
    width: 53px;
}

.marked-rows {
    position: relative;
}

.mark-pos {
    inset: -3px -8px -3px 114px;
}

.forces-box {
    margin-top: auto;
}

.forces-wrap {
    position: relative;
    margin: 2px 0 0 17px;
}

.forces th {
    height: 34px;
}

.forces .active td {
    background: #e9e9e9;
}

.forces .sorted {
    color: #fff;
    background: #b56848;
}

.forces .sorted svg {
    fill: #fff;
    margin-left: 5px;
    vertical-align: 1px;
}

.forces .focus {
    outline: 1px solid #f46f24;
    outline-offset: -1px;
}

.arrow {
    display: block;
    margin: 0 auto;
    stroke: #333;
    stroke-width: 2;
}

.c1 { width: 29px; }
.c2 { width: 60px; }
.c3 { width: 42px; }
.c4 { width: 56px; }
.c5 { width: 50px; }
.c6 { width: 69px; }
.c7 { width: 67px; }

.mark-forces {
    inset: 26px 17px -6px 82px;
}

.note {
    margin: 6px 0 0 22px;
    padding-right: 10px;
    color: #000;
}

/* status bar */
.status {
    display: flex;
    gap: 17px;
    height: 32px;
    padding: 0 8px;
    line-height: 32px;
    color: #fff;
    background: #000;
}

.status b {
    font-weight: 600;
}
```
